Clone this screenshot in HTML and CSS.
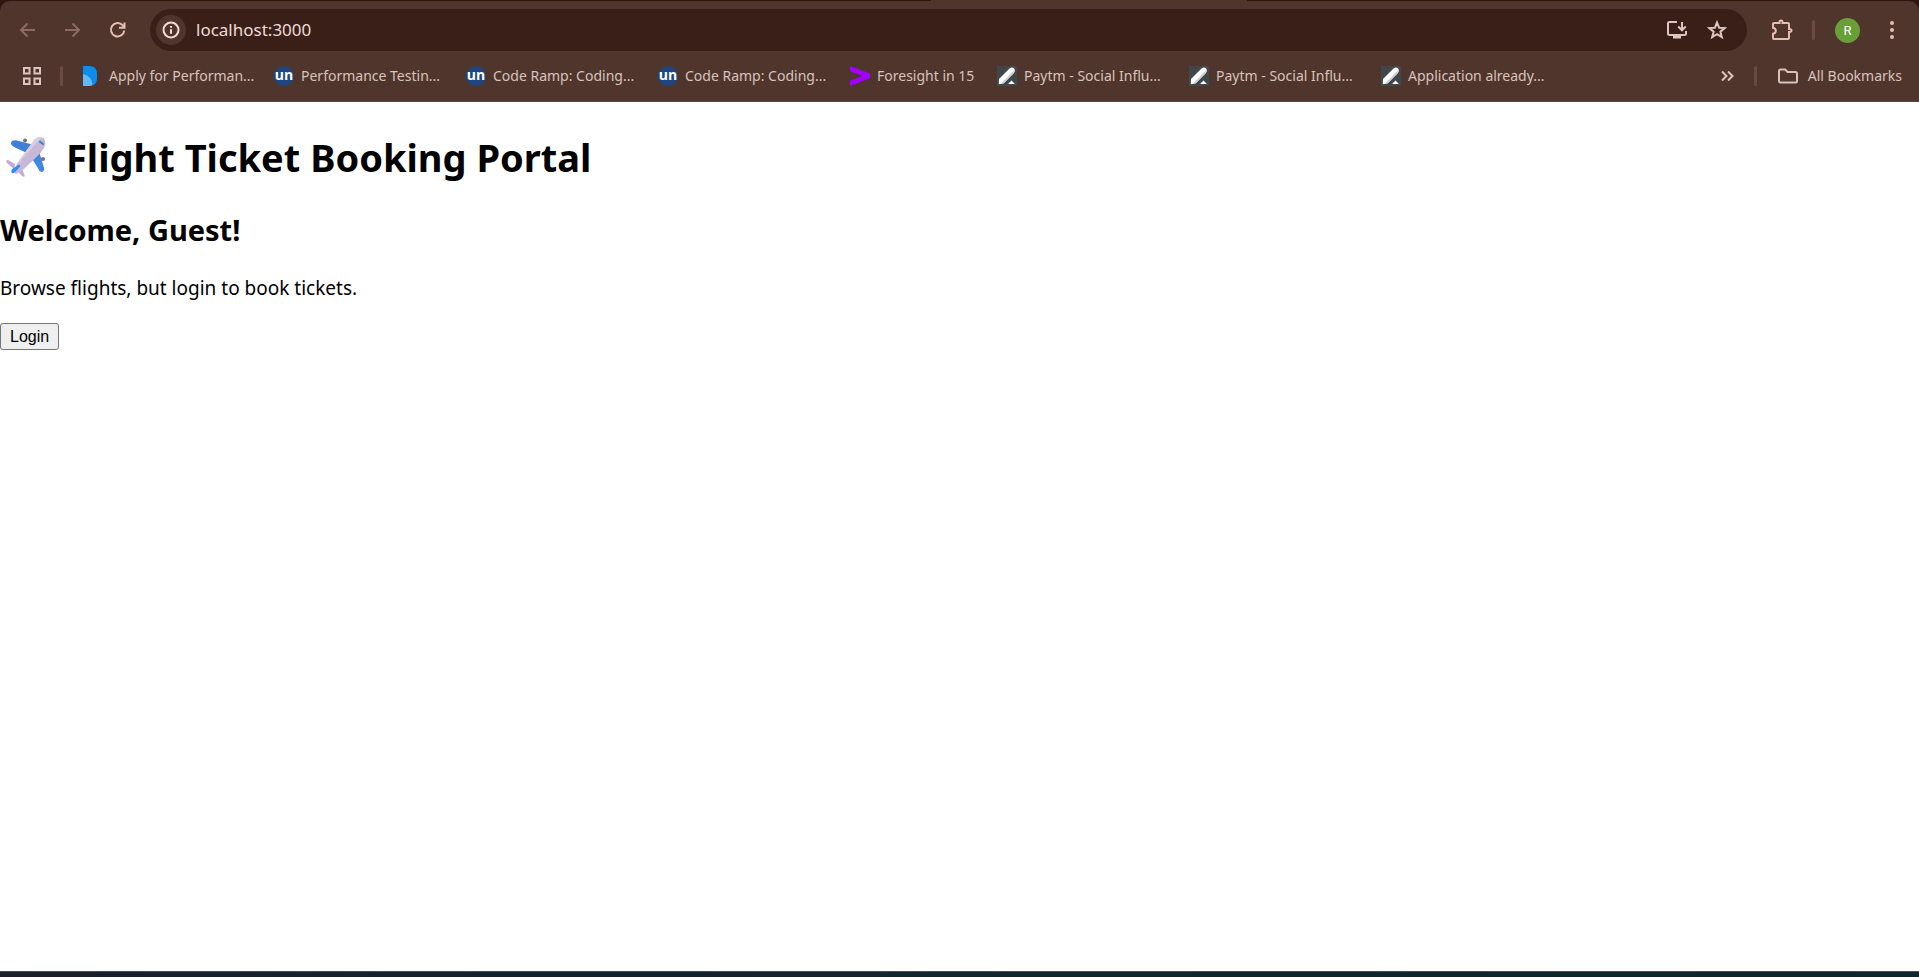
FILE: index.html
```html
<!DOCTYPE html>
<html lang="en">
<head>
<meta charset="utf-8">
<title>Flight Ticket Booking Portal</title>
<link rel="stylesheet" href="styles.css">
</head>
<body>
<svg class="sprite" aria-hidden="true">
  <symbol id="note" viewBox="0 0 20 20">
    <rect width="20" height="20" fill="#3f474a"/>
    <path d="M2 13 12.500 2.500q3-2 5 .5 1 2-.5 4L6.500 17.500 1.800 18.200Z" fill="#fff"/>
    <path d="M5 16.500 16.800 4.500q1 1.500-.5 3L6.500 17.500Z" fill="#cfcfcf"/>
    <path d="m11 18 3.500-3.500L18 18Z" fill="#fff"/>
  </symbol>
</svg>
<header class="browser">
  <div class="toolbar">
    <nav class="nav">
      <button class="icon-btn dim" aria-label="Back"><svg width="20" height="20" viewBox="0 0 20 20"><path d="M17 10H3.500M9.500 3.500 3 10l6.500 6.500"/></svg></button>
      <button class="icon-btn dim" aria-label="Forward"><svg width="20" height="20" viewBox="0 0 20 20"><path d="M2 10h13.500M9.500 3.500 16 10l-6.500 6.500"/></svg></button>
      <button class="icon-btn pink" aria-label="Reload"><svg width="20" height="20" viewBox="0 0 20 20"><path d="M16.300 10.500a6.700 6.700 0 1 1-1.600-5.200L16.500 7.200M16.500 2.500v5.200H11"/></svg></button>
    </nav>
    <div class="omnibox">
      <button class="info" aria-label="Site information"><svg width="20" height="20" viewBox="0 0 20 20"><circle cx="10" cy="10" r="7.500"/><path d="M10 9.200v4.600M10 6v1.800"/></svg></button>
      <input class="url" aria-label="Address" value="localhost:3000">
      <button class="icon-btn pale" aria-label="Install"><svg width="22" height="20" viewBox="0 0 22 20"><path d="M11 2H3.500Q2 2 2 3.500v10Q2 15 3.500 15h15q1.500 0 1.500-1.500V11M16 2v8M12.200 6.500 16 10.300l3.800-3.800"/><path d="M7 15h8v3.500H7z" fill="currentColor" stroke="none"/></svg></button>
      <button class="icon-btn pale" aria-label="Bookmark this page"><svg width="20" height="20" viewBox="0 0 20 20"><path d="m10 2.500 2.100 5.200 5.600.4-4.300 3.600 1.400 5.500-4.800-3-4.800 3 1.400-5.500-4.300-3.600 5.600-.4Z"/></svg></button>
    </div>
    <div class="tools">
      <button class="icon-btn pink" aria-label="Extensions"><svg width="22" height="22" viewBox="0 0 22 22"><path d="M3 4h5.500q-.3-2.500 1.500-2.500T11.500 4H17q1 0 1 1v5q2.500-.2 2.500 1.500T18 13v6q0 1-1 1H3q-1 0-1-1v-4.200q2.800-.5 2.800-3T2 8.800V5q0-1 1-1Z"/></svg></button>
      <span class="divider"></span>
      <button class="avatar" aria-label="Profile">R</button>
      <button class="icon-btn pink" aria-label="Menu"><svg width="20" height="20" viewBox="0 0 20 20"><g fill="currentColor" stroke="none"><circle cx="10" cy="3" r="2"/><circle cx="10" cy="10" r="2"/><circle cx="10" cy="17" r="2"/></g></svg></button>
    </div>
  </div>
  <nav class="bookmarks">
    <button class="icon-btn pale" aria-label="Apps"><svg width="20" height="20" viewBox="0 0 20 20"><path d="M2 2h5.500v5.500H2zM12.500 2H18v5.500h-5.500zM2 12.500h5.500V18H2zM12.500 12.500H18V18h-5.500z"/></svg></button>
    <span class="divider"></span>
    <a class="bookmark" href="#"><svg width="20" height="20" viewBox="0 0 20 20"><path d="M1 0h6q8 0 8 8v4q0 8-8 8H1Z" fill="#0d8ceb"/><path d="M1 8q9 2 9.500 11-1.500 1-3.500 1H1Z" fill="#64b8f7"/></svg><span>Apply for Performan...</span></a>
    <a class="bookmark" href="#"><i class="un">un</i><span>Performance Testin...</span></a>
    <a class="bookmark" href="#"><i class="un">un</i><span>Code Ramp: Coding...</span></a>
    <a class="bookmark" href="#"><i class="un">un</i><span>Code Ramp: Coding...</span></a>
    <a class="bookmark short" href="#"><svg width="20" height="20" viewBox="0 0 20 20"><path d="M0 0 20 7.500v4.700L0 20v-5.200l12.500-4.900L0 5.200Z" fill="#a100ff"/></svg><span>Foresight in 15</span></a>
    <a class="bookmark" href="#"><svg width="20" height="20"><use href="#note"/></svg><span>Paytm - Social Influ...</span></a>
    <a class="bookmark" href="#"><svg width="20" height="20"><use href="#note"/></svg><span>Paytm - Social Influ...</span></a>
    <a class="bookmark" href="#"><svg width="20" height="20"><use href="#note"/></svg><span>Application already...</span></a>
    <div class="overflow">
      <button class="icon-btn pale" aria-label="More bookmarks"><svg width="14" height="14" viewBox="0 0 14 14"><path d="m2 2.500 4.500 4.500L2 11.500M8 2.500 12.500 7 8 11.500"/></svg></button>
      <span class="divider"></span>
      <a class="all" href="#"><svg width="22" height="20" viewBox="0 0 22 20"><path d="M3.500 3.500h4.700l2.300 2.500h8q1.500 0 1.500 1.500V15q0 1.500-1.500 1.500h-15Q2 16.500 2 15V5q0-1.500 1.500-1.500Z"/></svg>All Bookmarks</a>
    </div>
  </nav>
</header>
<main class="page">
  <h1 class="title"><svg class="plane" width="40" height="48" viewBox="0 0 40 48" role="img" aria-label="Airplane">
    <g fill="#747078"><circle cx="19" cy="7.500" r="2"/><circle cx="37" cy="26" r="2"/></g>
    <path d="M6 8q3-1.500 7 0l15 4-7 8L8 14Q3 11 6 8Z" fill="#417fd4"/>
    <path d="m33 18 5 17q.5 4-2.500 4-2 0-3-3L25 24Z" fill="#3f87e2"/>
    <path d="M9 31 2 27q-3 0-1 3l7 6Zm7 5 2.500 6q.5 3-2.500 1l-6-7Z" fill="#c1a9d8"/>
    <path d="M28.500 6.500q4.500-3.500 9-1.500 3 3 1 9-2 4-6 8L18 36q-4 3-8 5-2.500-1-1-5 1-4 3.500-7Z" fill="#c8b8d7"/>
    <path d="M28.500 6.500q4-3.500 7.500-2Q28 12 13 30q-2 2-4 5 1-4 3.500-7Z" fill="#d8cede"/>
    <path d="m6 36 6-4q3-1 2 2l-6 6q-4 1-2-4Z" fill="#318cf5"/>
    <path d="m34 7.500 4 3-.5 2-5-3.500Z" fill="#258bc8"/>
  </svg><span>Flight Ticket Booking Portal</span></h1>
  <h2 class="welcome">Welcome, Guest!</h2>
  <p class="intro">Browse flights, but login to book tickets.</p>
  <button class="login">Login</button>
</main>
<footer class="taskbar"></footer>
</body>
</html>
```
FILE: styles.css
```css
* { box-sizing: border-box; }
body {
  margin: 0;
  min-height: 100vh;
  display: flex;
  flex-direction: column;
  background: #fff;
  color: #000;
  font-family: "Noto Sans", "Open Sans", sans-serif;
}
button { font: inherit; color: inherit; cursor: pointer; }
svg { display: block; flex: none; fill: none; stroke: none; }
.sprite { position: absolute; width: 0; height: 0; }

.browser {
  padding-top: 1px;
  background: linear-gradient(90deg, #31140f 48.5%, #50352d 48.5% 65%, #31140f 65%);
}
.toolbar {
  display: flex;
  align-items: center;
  height: 50px;
  padding: 8px 17px 0 18px;
  background: #50352d;
  border-radius: 10px 10px 0 0;
}
.icon-btn {
  display: flex;
  flex: none;
  padding: 0;
  border: 0;
  background: none;
}
.icon-btn svg, .info svg, .all svg { stroke: currentColor; stroke-width: 2; }
.dim { color: #8b6b63; }
.pink { color: #e7bdb2; }
.pale { color: #dcc6c0; }
.nav { display: flex; gap: 25px; margin-right: 22px; }
.omnibox {
  display: flex;
  flex: 1;
  align-items: center;
  height: 42px;
  padding: 0 20px 0 6px;
  border-radius: 21px;
  background: #3a1f18;
}
.omnibox .pale { margin-left: 19px; }
.info {
  display: flex;
  align-items: center;
  justify-content: center;
  width: 30px;
  height: 30px;
  padding: 0;
  border: 0;
  border-radius: 50%;
  background: #50352d;
  color: #f1dcd6;
}
.url {
  flex: 1;
  min-width: 0;
  margin-left: 10px;
  padding: 0;
  border: 0;
  outline: 0;
  background: none;
  color: #eddbd6;
  font: 17px/24px "Noto Sans", "Open Sans", sans-serif;
}
.tools { display: flex; align-items: center; margin-left: 24px; }
.divider { flex: none; width: 3px; height: 20px; border-radius: 2px; background: #6b4a41; }
.tools .divider { margin: 0 20px 0 19px; }
.avatar {
  width: 25px;
  height: 25px;
  margin-right: 22px;
  padding: 0;
  border: 0;
  border-radius: 50%;
  background: #689f38;
  color: #fff;
  font: 13px/25px Roboto, sans-serif;
}
.bookmarks {
  display: flex;
  align-items: center;
  height: 51px;
  padding: 0 17px 0 22px;
  border-bottom: 1px solid #5d443d;
  background: #50352d;
  color: #d8c2bc;
  font-size: 14px;
  line-height: 20px;
}
.bookmarks > .divider { margin: 0 19px 0 18px; }
.bookmark, .all { display: flex; align-items: center; color: inherit; text-decoration: none; white-space: nowrap; }
.bookmark { flex: 0 1 192px; gap: 7px; }
.short { flex-basis: 147px; }
.un {
  width: 20px;
  height: 20px;
  border-radius: 50%;
  background: #1d4580;
  color: #fff;
  font: bold 14px/18px "Open Sans", sans-serif;
  text-align: center;
}
.overflow { display: flex; align-items: center; margin-left: auto; }
.overflow .divider { margin: 0 20px; }
.all { gap: 9px; }

.page { flex: 1; padding: 28px 0; }
.title {
  display: flex;
  align-items: center;
  gap: 20px;
  margin: 0 0 26px;
  padding-left: 6px;
  font-size: 38px;
  line-height: 54px;
}
.welcome { margin: 0 0 25px; font-size: 29px; line-height: 40px; }
.intro { margin: 0 0 22px; font-size: 19px; line-height: 26px; }
.login {
  height: 27px;
  padding: 0 9px;
  border: 1px solid #767676;
  border-radius: 3px;
  background: #efefef;
  color: #000;
  font: 16px/24px "Liberation Sans", Arial, sans-serif;
}
.taskbar {
  height: 6px;
  border-top: 1px solid #46515a;
  background: linear-gradient(90deg, #1d1f2b, #14242d 20%, #11262c);
}
```
